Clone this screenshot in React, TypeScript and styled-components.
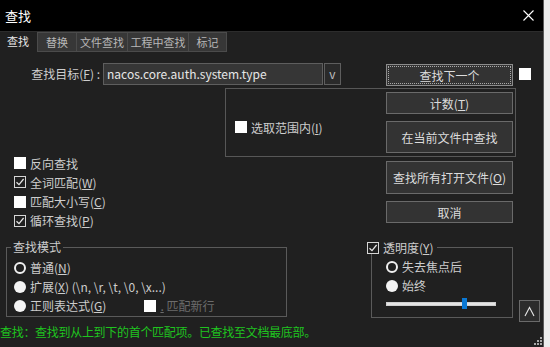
import React from 'react';
import styled, { createGlobalStyle } from 'styled-components';

const GlobalStyle = createGlobalStyle`
  html, body {
    margin: 0;
    padding: 0;
    background: #ececec;
  }
  body {
    font-family: "Noto Sans CJK SC", "Noto Sans", sans-serif;
    font-size: 12px;
  }
  * {
    box-sizing: border-box;
  }
`;

const Screen = styled.div`
  display: flex;
  width: 550px;
  height: 347px;
  overflow: hidden;
  background: #ececec;
`;

const Dialog = styled.div`
  width: 544px;
  height: 347px;
  flex: none;
  display: flex;
  flex-direction: column;
  background: #202020;
  border-right: 1px solid #5a5a5a;
  color: #cdcdcd;
`;

const TitleBar = styled.div`
  height: 32px;
  flex: none;
  display: flex;
  align-items: center;
  justify-content: space-between;
  padding: 0 9px 1px 5px;
  background: #000;
  border-bottom: 1px solid #2c2c2c;
  color: #fff;
  font-size: 13px;
`;

const TabBar = styled.div`
  height: 20px;
  flex: none;
  display: flex;
  padding-left: 2px;
`;

const Tab = styled.div<{ $active?: boolean; $w: number }>`
  width: ${(p) => p.$w}px;
  height: ${(p) => (p.$active ? 21 : 20)}px;
  margin-left: ${(p) => (p.$active ? 0 : -1)}px;
  border: ${(p) => (p.$active ? 'none' : '1px solid #4b4b4b')};
  background: ${(p) => (p.$active ? '#202020' : '#373737')};
  color: ${(p) => (p.$active ? '#e6e6e6' : '#b8b8b8')};
  font-size: 11px;
  line-height: 18px;
  text-align: center;
  padding-right: ${(p) => (p.$active ? 3 : 0)}px;

  &:nth-child(2) {
    margin-left: 0;
  }
`;

const Body = styled.div`
  flex: 1;
  display: flex;
  flex-direction: column;
`;

const FindRow = styled.div`
  display: flex;
  align-items: flex-start;
  height: 22px;
  margin-top: 11px;
`;

const FieldLabel = styled.div`
  width: 101px;
  padding-right: 1px;
  text-align: right;
  line-height: 22px;
  white-space: nowrap;
`;

const TextField = styled.div`
  width: 220px;
  height: 22px;
  margin-left: 2px;
  padding-left: 3px;
  border: 1px solid #5e5e5e;
  background: #363636;
  color: #e6e6e6;
  line-height: 20px;
  white-space: nowrap;
  overflow: hidden;
`;

const DropButton = styled.div`
  width: 17px;
  height: 22px;
  margin-left: 1px;
  border: 1px solid #5e5e5e;
  background: #2a2a2a;
  color: #bdbdbd;
  text-align: center;
  line-height: 19px;
  font-size: 12px;
`;

const Button = styled.div<{ $h?: number; $focus?: boolean }>`
  width: 127px;
  height: ${(p) => p.$h ?? 22}px;
  flex: none;
  display: flex;
  align-items: center;
  justify-content: center;
  border: 1px solid ${(p) => (p.$focus ? '#8c8c8c' : '#6a6a6a')};
  background: #333333;
  color: #dcdcdc;
  white-space: nowrap;
  outline: ${(p) => (p.$focus ? '1px dotted #a8a8a8' : 'none')};
  outline-offset: -3px;
`;

const NextButton = styled(Button)`
  margin-left: 45px;
  margin-top: 1px;
`;

const SideCheck = styled.div`
  margin-left: 6px;
  margin-top: 5px;
`;

const RangeBox = styled.div`
  display: flex;
  width: 291px;
  height: 69px;
  margin-left: 225px;
  margin-top: 3px;
  padding: 3px 2px 3px 9px;
  border: 1px solid #575757;
`;

const RangeCheck = styled.div`
  flex: 1;
  margin-top: 29px;
`;

const ButtonColumn = styled.div<{ $gap: number; $top?: number }>`
  display: flex;
  flex-direction: column;
  gap: ${(p) => p.$gap}px;
  margin-top: ${(p) => p.$top ?? 0}px;
`;

const OptionsRow = styled.div`
  display: flex;
  height: 90px;
`;

const OptionList = styled.div`
  flex: 1;
  display: flex;
  flex-direction: column;
  gap: 7.33px;
  margin-left: 14px;
`;

const OptionButtons = styled(ButtonColumn)`
  margin-right: 30px;
`;

const CheckLine = styled.label`
  display: flex;
  align-items: center;
  height: 12px;
  gap: 4px;
  white-space: nowrap;
`;

const Box = styled.span<{ $checked?: boolean }>`
  width: 12px;
  height: 12px;
  flex: none;
  display: flex;
  align-items: center;
  justify-content: center;
  background: ${(p) => (p.$checked ? '#202020' : '#ffffff')};
  border: 1px solid ${(p) => (p.$checked ? '#d6d6d6' : '#ffffff')};
`;

const Dot = styled.span<{ $checked?: boolean }>`
  width: 12px;
  height: 12px;
  flex: none;
  border-radius: 50%;
  background: ${(p) => (p.$checked ? '#202020' : '#f4f4f4')};
  border: ${(p) => (p.$checked ? '2px solid #f0f0f0' : 'none')};
`;

const Muted = styled.span`
  color: #6c6c6c;
`;

const BottomRow = styled.div`
  display: flex;
  align-items: flex-start;
  height: 75px;
`;

const GroupBox = styled.div<{ $w: number; $h: number; $left: number; $pad: string }>`
  position: relative;
  width: ${(p) => p.$w}px;
  height: ${(p) => p.$h}px;
  margin-left: ${(p) => p.$left}px;
  padding: ${(p) => p.$pad};
  border: 1px solid #5a5a5a;
  display: flex;
  flex-direction: column;
`;

const Caption = styled.div<{ $top: number; $left: number }>`
  position: absolute;
  top: ${(p) => p.$top}px;
  left: ${(p) => p.$left}px;
  padding: 0 2px 0 2px;
  background: #202020;
  line-height: 14px;
  display: flex;
  align-items: center;
`;

const CaptionCheck = styled(Caption)`
  padding: 0 3px 0 0;
`;

const RadioRow = styled.div`
  height: 19px;
  display: flex;
  align-items: center;
  gap: 4px;
  white-space: nowrap;
`;

const NewlineCheck = styled(CheckLine)`
  margin-left: 34px;
`;

const Slider = styled.div`
  position: relative;
  width: 110px;
  height: 11px;
  margin-top: 3px;
  display: flex;
  align-items: center;
`;

const Track = styled.div`
  width: 100%;
  height: 4px;
  background: #e4e4e4;
  border: 1px solid #cfcfcf;
`;

const Thumb = styled.div`
  position: absolute;
  top: 0;
  width: 5px;
  height: 11px;
  background: #0a78d4;
`;

const UpButton = styled.div`
  width: 21px;
  height: 22px;
  margin-left: 6px;
  margin-top: 53px;
  border: 1px solid #6a6a6a;
  background: #2c2c2c;
  display: flex;
  align-items: center;
  justify-content: center;
`;

const StatusRow = styled.div`
  flex: 1;
  display: flex;
  justify-content: space-between;
  padding-top: 1px;
`;

const StatusText = styled.div`
  color: #1fc41f;
  font-size: 12px;
  line-height: 18px;
  white-space: nowrap;
  letter-spacing: -0.3px;
`;

const Grip = styled.svg`
  align-self: flex-end;
  margin: 0 1px 2px 0;
`;

const Check = () => (
  <svg width="10" height="10" viewBox="0 0 10 10">
    <polyline points="1.5,5.2 4,7.6 8.6,2" fill="none" stroke="#e8e8e8" strokeWidth="1.2" />
  </svg>
);

const CheckBox: React.FC<{ checked?: boolean }> = ({ checked }) => (
  <Box $checked={checked}>{checked && <Check />}</Box>
);

const App: React.FC = () => {
  const opacity = 0.69;

  return (
    <>
      <GlobalStyle />
      <Screen>
        <Dialog>
          <TitleBar>
            <span>查找</span>
            <svg width="11" height="11" viewBox="0 0 11 11">
              <path d="M0.5 0.5 L10.5 10.5 M10.5 0.5 L0.5 10.5" stroke="#ffffff" strokeWidth="1.1" />
            </svg>
          </TitleBar>

          <TabBar>
            <Tab $active $w={35}>查找</Tab>
            <Tab $w={40}>替换</Tab>
            <Tab $w={52}>文件查找</Tab>
            <Tab $w={62}>工程中查找</Tab>
            <Tab $w={39}>标记</Tab>
          </TabBar>

          <Body>
            <FindRow>
              <FieldLabel>
                查找目标(<u>F</u>) :
              </FieldLabel>
              <TextField>nacos.core.auth.system.type</TextField>
              <DropButton>v</DropButton>
              <NextButton $focus>查找下一个</NextButton>
              <SideCheck>
                <CheckBox />
              </SideCheck>
            </FindRow>

            <RangeBox>
              <RangeCheck>
                <CheckLine>
                  <CheckBox />
                  <span>
                    选取范围内(<u>I</u>)
                  </span>
                </CheckLine>
              </RangeCheck>
              <ButtonColumn $gap={7}>
                <Button>
                  计数(<u>T</u>)
                </Button>
                <Button $h={32}>在当前文件中查找</Button>
              </ButtonColumn>
            </RangeBox>

            <OptionsRow>
              <OptionList>
                <CheckLine>
                  <CheckBox />
                  <span>反向查找</span>
                </CheckLine>
                <CheckLine>
                  <CheckBox checked />
                  <span>
                    全词匹配(<u>W</u>)
                  </span>
                </CheckLine>
                <CheckLine>
                  <CheckBox />
                  <span>
                    匹配大小写(<u>C</u>)
                  </span>
                </CheckLine>
                <CheckLine>
                  <CheckBox checked />
                  <span>
                    循环查找(<u>P</u>)
                  </span>
                </CheckLine>
              </OptionList>
              <OptionButtons $gap={7} $top={4}>
                <Button $h={33}>
                  查找所有打开文件(<u>O</u>)
                </Button>
                <Button>取消</Button>
              </OptionButtons>
            </OptionsRow>

            <BottomRow>
              <GroupBox $w={281} $h={70} $left={6} $pad="10px 0 0 7px">
                <Caption $top={-8} $left={4}>
                  查找模式
                </Caption>
                <RadioRow>
                  <Dot $checked />
                  <span>
                    普通(<u>N</u>)
                  </span>
                </RadioRow>
                <RadioRow>
                  <Dot />
                  <span>
                    扩展(<u>X</u>) (\n, \r, \t, \0, \x...)
                  </span>
                </RadioRow>
                <RadioRow>
                  <Dot />
                  <span>
                    正则表达式(<u>G</u>)
                  </span>
                  <NewlineCheck>
                    <CheckBox />
                    <Muted>
                      <u>.</u> 匹配新行
                    </Muted>
                  </NewlineCheck>
                </RadioRow>
              </GroupBox>

              <GroupBox $w={142} $h={71} $left={84} $pad="9px 0 0 14px">
                <CaptionCheck $top={-6} $left={-5}>
                  <CheckLine>
                    <CheckBox checked />
                    <span>
                      透明度(<u>Y</u>)
                    </span>
                  </CheckLine>
                </CaptionCheck>
                <RadioRow>
                  <Dot $checked />
                  <span>失去焦点后</span>
                </RadioRow>
                <RadioRow>
                  <Dot />
                  <span>始终</span>
                </RadioRow>
                <Slider>
                  <Track />
                  <Thumb style={{ left: `${Math.round(opacity * 110)}px` }} />
                </Slider>
              </GroupBox>

              <UpButton>
                <svg width="11" height="11" viewBox="0 0 11 11">
                  <polyline points="1,10 5.5,1.5 10,10" fill="none" stroke="#e6e6e6" strokeWidth="1.1" />
                </svg>
              </UpButton>
            </BottomRow>

            <StatusRow>
              <StatusText>查找：查找到从上到下的首个匹配项。已查找至文档最底部。</StatusText>
              <Grip width="9" height="9" viewBox="0 0 9 9">
                <rect x="7" y="1" width="2" height="2" fill="#a6a6a6" />
                <rect x="4" y="4" width="2" height="2" fill="#a6a6a6" />
                <rect x="7" y="4" width="2" height="2" fill="#a6a6a6" />
                <rect x="1" y="7" width="2" height="2" fill="#a6a6a6" />
                <rect x="4" y="7" width="2" height="2" fill="#a6a6a6" />
                <rect x="7" y="7" width="2" height="2" fill="#a6a6a6" />
              </Grip>
            </StatusRow>
          </Body>
        </Dialog>
      </Screen>
    </>
  );
};

export default App;
